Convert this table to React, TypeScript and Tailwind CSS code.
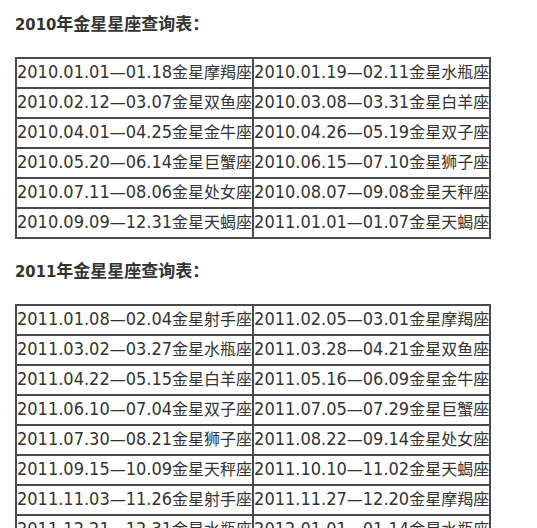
const t2010: [string, string][] = [
  ["2010.01.01—01.18金星摩羯座", "2010.01.19—02.11金星水瓶座"],
  ["2010.02.12—03.07金星双鱼座", "2010.03.08—03.31金星白羊座"],
  ["2010.04.01—04.25金星金牛座", "2010.04.26—05.19金星双子座"],
  ["2010.05.20—06.14金星巨蟹座", "2010.06.15—07.10金星狮子座"],
  ["2010.07.11—08.06金星处女座", "2010.08.07—09.08金星天秤座"],
  ["2010.09.09—12.31金星天蝎座", "2011.01.01—01.07金星天蝎座"],
];

const t2011: [string, string][] = [
  ["2011.01.08—02.04金星射手座", "2011.02.05—03.01金星摩羯座"],
  ["2011.03.02—03.27金星水瓶座", "2011.03.28—04.21金星双鱼座"],
  ["2011.04.22—05.15金星白羊座", "2011.05.16—06.09金星金牛座"],
  ["2011.06.10—07.04金星双子座", "2011.07.05—07.29金星巨蟹座"],
  ["2011.07.30—08.21金星狮子座", "2011.08.22—09.14金星处女座"],
  ["2011.09.15—10.09金星天秤座", "2011.10.10—11.02金星天蝎座"],
  ["2011.11.03—11.26金星射手座", "2011.11.27—12.20金星摩羯座"],
  ["2011.12.21—12.31金星水瓶座", "2012.01.01—01.14金星水瓶座"],
];

const num = { fontFamily: '"DejaVu Sans Condensed", "DejaVu Sans", sans-serif', fontStretch: "condensed" };

// digits look tall & narrow in the picture, the chinese part stays at 16px
function Cell({ text }: { text: string }) {
  const m = text.match(/^([\d.]+)—([\d.]+)(.*)$/);
  if (!m) return <>{text}</>;
  return (
    <div className="h-[28px] leading-[28px] overflow-hidden whitespace-nowrap">
      <span className="text-[18px] leading-none" style={num}>{m[1]}</span>
      <span className="leading-none">—</span>
      <span className="text-[18px] leading-none" style={num}>{m[2]}</span>
      <span className="leading-none">{m[3]}</span>
    </div>
  );
}

function VenusTable({ rows }: { rows: [string, string][] }) {
  return (
    <table className="border-separate border-spacing-0 border border-[#4a4a4a]">
      <tbody>
        {rows.map((r, i) => (
          <tr key={i}>
            {r.map((c, j) => (
              <td key={j} className="border border-[#4a4a4a] p-0">
                <Cell text={c} />
              </td>
            ))}
          </tr>
        ))}
      </tbody>
    </table>
  );
}

function Title({ year, className }: { year: string; className?: string }) {
  return (
    <h3 className={`font-bold h-[28px] leading-[28px] text-[17px] overflow-hidden ${className ?? ""}`}>
      <span className="text-[16.5px] leading-none" style={num}>{year}</span>
      <span className="leading-none">年金星星座查询表：</span>
    </h3>
  );
}

export default function App() {
  return (
    <div
      className="bg-white text-[#333] text-[16px] px-[15px] pt-[10px] pb-10 w-[537px] h-[528px] overflow-hidden"
      style={{ fontFamily: '"DejaVu Sans", "Noto Sans CJK SC", sans-serif' }}
    >
      <Title year="2010" className="mb-[19px]" />
      <VenusTable rows={t2010} />
      <Title year="2011" className="mt-[18px] mb-[19px]" />
      <VenusTable rows={t2011} />
    </div>
  );
}
